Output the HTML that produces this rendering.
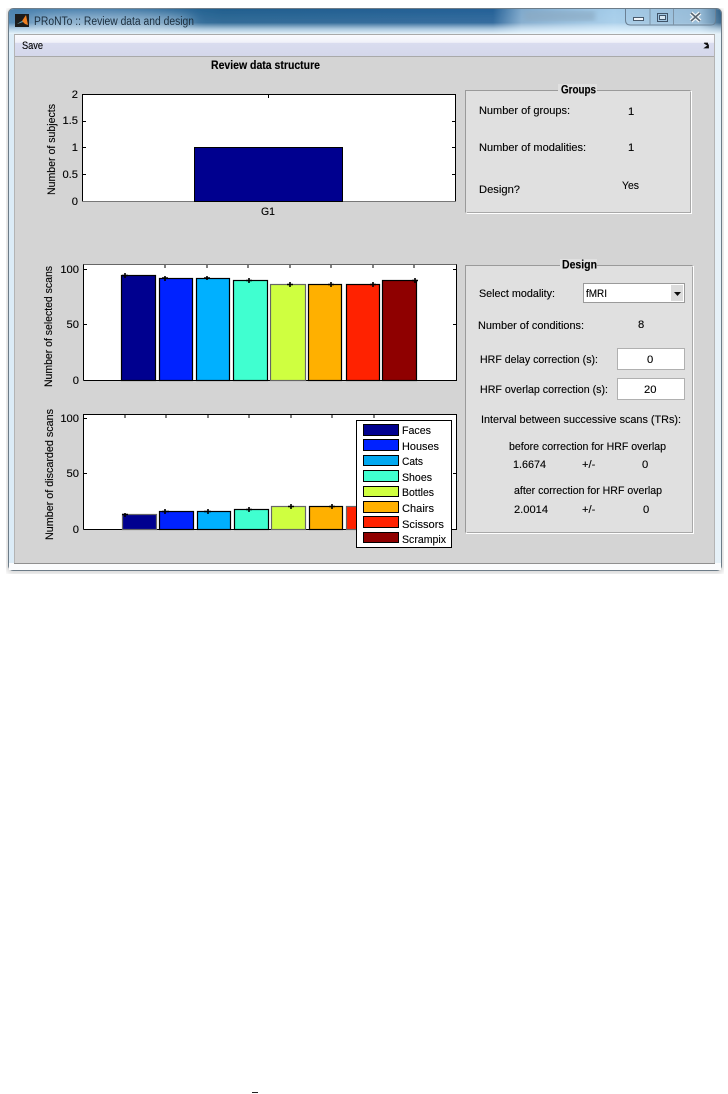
<!DOCTYPE html>
<html><head><meta charset="utf-8"><title>PRoNTo</title>
<style>
html,body{margin:0;padding:0;background:#fff;width:728px;height:1094px;overflow:hidden}
svg{display:block}
text{font-family:"Liberation Sans",sans-serif;font-size:11.2px;fill:#000;stroke:#000;stroke-width:.12px}
.b{font-weight:bold;font-size:11.5px;fill:#000}
</style></head><body>
<svg width="728" height="1094" viewBox="0 0 728 1094" xmlns="http://www.w3.org/2000/svg">
<defs>
<linearGradient id="tb" x1="0" x2="1" y1="0" y2="0">
<stop offset="0" stop-color="#4d84b0"/><stop offset=".12" stop-color="#3a74a5"/><stop offset=".3" stop-color="#22608f"/>
<stop offset=".68" stop-color="#256197"/><stop offset=".72" stop-color="#7fa9cc"/><stop offset=".85" stop-color="#a5cdea"/><stop offset=".97" stop-color="#8fb6d4"/><stop offset="1" stop-color="#2f5f86"/></linearGradient>
<linearGradient id="gl" x1="0" x2="0" y1="0" y2="1">
<stop offset="0" stop-color="#fff" stop-opacity="0"/><stop offset=".55" stop-color="#fff" stop-opacity=".08"/><stop offset=".8" stop-color="#e4f4ff" stop-opacity=".7"/><stop offset="1" stop-color="#f0faff" stop-opacity=".95"/></linearGradient>
<linearGradient id="mn" x1="0" x2="0" y1="0" y2="1">
<stop offset="0" stop-color="#fbfbfe"/><stop offset=".36" stop-color="#f0f1f9"/><stop offset=".4" stop-color="#d9dcef"/><stop offset="1" stop-color="#d4d7ea"/></linearGradient>
<linearGradient id="sd" x1="0" x2="0" y1="0" y2="1">
<stop offset="0" stop-color="#9cc4e2"/><stop offset=".25" stop-color="#c4dff2"/><stop offset="1" stop-color="#eef6fb"/></linearGradient>
<filter id="sh" x="-5%" y="-5%" width="110%" height="110%"><feGaussianBlur stdDeviation="2.5"/></filter>
<filter id="gw" x="-30%" y="-100%" width="160%" height="300%"><feGaussianBlur stdDeviation="6"/></filter>
<filter id="sf" x="0" y="0" width="100%" height="100%"><feGaussianBlur stdDeviation="0.32"/></filter>
</defs>

<g filter="url(#sf)">
<!-- window -->
<rect x="6" y="8" width="718" height="566" rx="6" fill="#000" opacity=".14" filter="url(#sh)"/>
<rect x="8.5" y="8.5" width="713" height="562" rx="5" fill="url(#sd)" stroke="#6d7c88"/>
<path d="M9 34V14q0-5 5-5H716q5 0 5 5V34Z" fill="url(#tb)"/>
<path d="M9 34V14q0-5 5-5H716q5 0 5 5V34Z" fill="url(#gl)"/>
<ellipse cx="110" cy="22" rx="85" ry="9" fill="#dcebf5" opacity=".55" filter="url(#gw)"/>
<rect x="9" y="34" width="5" height="530" fill="#dcecf7"/>
<rect x="715" y="34" width="6" height="530" fill="#e6f1f8"/>
<rect x="9" y="563" width="712" height="7" fill="#fbfcfd"/>

<!-- titlebar -->
<rect x="15" y="14" width="14" height="13" fill="#1b1b1b"/>
<path d="M17 24l5-3 4-6 2 10-3-1-2-2z" fill="#f08020"/>
<path d="M17 24l5-3 1 1z" fill="#3aa0c8"/>
<text x="34" y="25" style="font-size:11.5px;fill:#1c2e3e;stroke:none" textLength="160" lengthAdjust="spacingAndGlyphs">PRoNTo :: Review data and design</text>
<rect x="525" y="11" width="70" height="10" fill="#8aa8c0" opacity=".6" filter="url(#sh)"/>
<!-- caption buttons -->
<path d="M625.5 9V20q0 5 5 5H711q4 0 4.5-4V9" fill="#a9c8e0" fill-opacity=".25" stroke="#6a8094" stroke-width="1"/>
<path d="M650 9V25M673.5 9V25" stroke="#7d93a6" fill="none"/>
<rect x="633.5" y="17.5" width="10" height="3" fill="#f2f6fa" stroke="#4a5a6c"/>
<rect x="657.5" y="13.5" width="10" height="8" fill="none" stroke="#3f5268"/>
<rect x="659.5" y="15.5" width="6" height="4" fill="#d6e6f2" stroke="#3f5268"/>
<path d="M691 13l9 8M700 13l-9 8" stroke="#f4f6f8" stroke-width="4"/>
<path d="M691 13l9 8M700 13l-9 8" stroke="#5a6672" stroke-width="1.6"/>

<!-- client -->
<rect x="14" y="34" width="701" height="529" fill="#d4d4d4"/>
<rect x="14.5" y="34.5" width="700" height="22" fill="url(#mn)" stroke="#a9a9a9"/>
<path d="M14.5 34.5V563M714.5 34.5V563" stroke="#b4b4b4" fill="none"/>
<path d="M14 563.5H715" stroke="#8f8f8f"/>
<text x="22" y="49" textLength="21" lengthAdjust="spacingAndGlyphs">Save</text>
<path d="M704 43l3 2M704.5 43h3l0.5 3M708.5 48h-4l4-3z" stroke="#111" fill="#111" stroke-width=".8"/>

<text class="b" x="211" y="69" textLength="109" lengthAdjust="spacingAndGlyphs">Review data structure</text>

<!-- Axes 1 -->
<rect x="82.5" y="94.5" width="373" height="107" fill="#fff"/>
<path d="M82.5 201.5V94.5H455.5V201.5" fill="none" stroke="#000"/>
<path d="M82.5 201.5H455.5" stroke="#777"/>
<rect x="194.5" y="147.5" width="148" height="54" fill="#00008f" stroke="#000"/>
<path d="M268.5 95v3M83 94.5h3M83 121.5h3M83 147.5h3M83 174.5h3M452 121.5h3M452 147.5h3M452 174.5h3" stroke="#000"/>
<g text-anchor="end">
<text x="78" y="98">2</text><text x="78" y="124">1.5</text><text x="78" y="151">1</text><text x="78" y="178">0.5</text><text x="78" y="205">0</text>
</g>
<text x="261" y="215" textLength="14" lengthAdjust="spacingAndGlyphs">G1</text>
<text transform="translate(55,195) rotate(-90)" textLength="91" lengthAdjust="spacingAndGlyphs">Number of subjects</text>

<!-- Axes 2 -->
<rect x="83.5" y="264.5" width="373" height="116" fill="#fff"/>
<path d="M83.5 380.5V264.5H456.5V380.5H83.5" fill="none" stroke="#000"/>
<path d="M83.5 264.5H456.5" stroke="#666"/>
<g stroke="#000" stroke-width="1.2">
<rect x="121.5" y="275.5" width="34" height="105" fill="#00008f"/>
<rect x="159.5" y="278.5" width="33" height="102" fill="#0020ff"/>
<rect x="196.5" y="278.5" width="33" height="102" fill="#00b0ff"/>
<rect x="233.5" y="280.5" width="34" height="100" fill="#40ffd0"/>
<rect x="270.5" y="284.5" width="35" height="96" fill="#cfff40" stroke="#666"/>
<rect x="308.5" y="284.5" width="33" height="96" fill="#ffb000"/>
<rect x="346.5" y="284.5" width="33" height="96" fill="#ff2000"/>
<rect x="382.5" y="280.5" width="34" height="100" fill="#8f0000"/>
</g>
<g stroke="#000" fill="none">
<path stroke-width="1.6" d="M122 275.5h6M125 273v5M162 278h6M165 276v5M204 278h6M207 276v4M246 280.5h6M249 278v5M287 284.5h6M290 282v5M328 284.5h6M331 282v5M370 284.5h6M373 282v5M412 280.5h6M415 278v5"/>
<path d="M84 269.5h3M84 324.5h3M453 269.5h3M453 324.5h3M165 265v3M207 265v3M248 265v3M290 265v3M331 265v3M373 265v3M414 265v3"/>
</g>
<g text-anchor="end">
<text x="79" y="273">100</text><text x="79" y="328">50</text><text x="79" y="384">0</text>
</g>
<text transform="translate(52,387) rotate(-90)" textLength="121" lengthAdjust="spacingAndGlyphs">Number of selected scans</text>

<!-- Axes 3 -->
<rect x="83.5" y="414.5" width="373" height="115" fill="#fff"/>
<path d="M83.5 529.5V414.5H456.5V529.5H83.5" fill="none" stroke="#000"/>
<g stroke="#000" stroke-width="1.2">
<rect x="122.5" y="514.5" width="34" height="15" fill="#00008f" stroke="#666"/>
<rect x="159.5" y="511.5" width="34" height="18" fill="#0020ff"/>
<rect x="197.5" y="511.5" width="33" height="18" fill="#00b0ff"/>
<rect x="234.5" y="509.5" width="34" height="20" fill="#40ffd0"/>
<rect x="271.5" y="506.5" width="34" height="23" fill="#cfff40" stroke="#666"/>
<rect x="309.5" y="506.5" width="33" height="23" fill="#ffb000"/>
<rect x="346.5" y="506.5" width="34" height="23" fill="#ff2000" stroke="#666"/>
</g>
<g stroke="#000" fill="none">
<path stroke-width="1.6" d="M122 514.5h6M125 513v4M162 511.5h7M165 509v5M204 511.5h7M208 509v5M246 509.5h6M249 507v5M288 506.5h6M291 504v5M329 506.5h6M332 504v5"/>
<path d="M84 418.5h3M84 473.5h3M453 473.5h3M125 415v3M166 415v3M208 415v3M249 415v3M291 415v3M332 415v3M374 415v3"/>
</g>
<g text-anchor="end">
<text x="79" y="422">100</text><text x="79" y="477">50</text><text x="79" y="533">0</text>
</g>
<text transform="translate(53,540) rotate(-90)" textLength="131" lengthAdjust="spacingAndGlyphs">Number of discarded scans</text>

<!-- Legend -->
<rect x="356.5" y="420.5" width="95" height="127" fill="#fff" stroke="#000"/>
<g stroke="#000">
<rect x="363.5" y="424.5" width="35" height="11" fill="#00008f"/>
<rect x="363.5" y="439.5" width="35" height="11" fill="#0020ff"/>
<rect x="363.5" y="455.5" width="35" height="10" fill="#00a8f0"/>
<rect x="363.5" y="470.5" width="35" height="11" fill="#40ffd0"/>
<rect x="363.5" y="486.5" width="35" height="10" fill="#cfff40"/>
<rect x="363.5" y="501.5" width="35" height="11" fill="#ffb000"/>
<rect x="363.5" y="516.5" width="35" height="11" fill="#ff2000"/>
<rect x="363.5" y="532.5" width="35" height="10" fill="#8f0000"/>
</g>
<text x="402" y="434" textLength="29" lengthAdjust="spacingAndGlyphs">Faces</text>
<text x="402" y="450" textLength="37" lengthAdjust="spacingAndGlyphs">Houses</text>
<text x="402" y="465" textLength="21" lengthAdjust="spacingAndGlyphs">Cats</text>
<text x="402" y="481" textLength="30" lengthAdjust="spacingAndGlyphs">Shoes</text>
<text x="402" y="496" textLength="32" lengthAdjust="spacingAndGlyphs">Bottles</text>
<text x="402" y="512" textLength="32" lengthAdjust="spacingAndGlyphs">Chairs</text>
<text x="402" y="528" textLength="42" lengthAdjust="spacingAndGlyphs">Scissors</text>
<text x="402" y="543" textLength="44" lengthAdjust="spacingAndGlyphs">Scrampix</text>

<!-- Groups panel -->
<rect x="465.5" y="90.5" width="225" height="122" fill="#e0e0e0"/>
<path d="M465.5 212.5V90.5H690.5" fill="none" stroke="#9a9a9a"/>
<path d="M466.5 213.5H691.5V91" fill="none" stroke="#fff"/>
<path d="M467 212.5H690.5V92" fill="none" stroke="#a8a8a8"/>
<rect x="558" y="84" width="39" height="11" fill="#e0e0e0"/>
<text class="b" x="561" y="93.5" textLength="35" lengthAdjust="spacingAndGlyphs">Groups</text>
<text x="479" y="114" textLength="91" lengthAdjust="spacingAndGlyphs">Number of groups:</text>
<text x="628" y="115">1</text>
<text x="479" y="151" textLength="107" lengthAdjust="spacingAndGlyphs">Number of modalities:</text>
<text x="628" y="151">1</text>
<text x="479" y="193" textLength="41" lengthAdjust="spacingAndGlyphs">Design?</text>
<text x="622" y="189" textLength="17" lengthAdjust="spacingAndGlyphs">Yes</text>

<!-- Design panel -->
<rect x="465.5" y="265.5" width="227" height="267" fill="#e0e0e0"/>
<path d="M465.5 532.5V265.5H692.5" fill="none" stroke="#9a9a9a"/>
<path d="M466 533.5H693.5V266" fill="none" stroke="#fff"/>
<path d="M467 532.5H692.5V267" fill="none" stroke="#a8a8a8"/>
<rect x="560" y="259" width="37" height="11" fill="#e0e0e0"/>
<text class="b" x="562" y="268.5" textLength="35" lengthAdjust="spacingAndGlyphs">Design</text>
<text x="479" y="297" textLength="76" lengthAdjust="spacingAndGlyphs">Select modality:</text>
<rect x="583.5" y="283.5" width="101" height="19" fill="#fff" stroke="#9a9a9a"/>
<rect x="671" y="285" width="12" height="16" fill="#dcdcdc"/>
<path d="M674 292h7l-3.5 4z" fill="#111"/>
<text x="586" y="297" textLength="21" lengthAdjust="spacingAndGlyphs">fMRI</text>
<text x="478" y="329" textLength="106" lengthAdjust="spacingAndGlyphs">Number of conditions:</text>
<text x="638" y="328">8</text>
<text x="480" y="363" textLength="118" lengthAdjust="spacingAndGlyphs">HRF delay correction (s):</text>
<rect x="617.5" y="348.5" width="67" height="21" fill="#fff" stroke="#b0b0b0"/>
<text x="647" y="363">0</text>
<text x="480" y="393" textLength="128" lengthAdjust="spacingAndGlyphs">HRF overlap correction (s):</text>
<rect x="617.5" y="378.5" width="67" height="21" fill="#fff" stroke="#b0b0b0"/>
<text x="644" y="393">20</text>
<text x="481" y="423" textLength="200" lengthAdjust="spacingAndGlyphs">Interval between successive scans (TRs):</text>
<text x="509" y="450" textLength="157" lengthAdjust="spacingAndGlyphs">before correction for HRF overlap</text>
<text x="513" y="468" textLength="33" lengthAdjust="spacingAndGlyphs">1.6674</text>
<text x="582" y="468">+/-</text>
<text x="642" y="468">0</text>
<text x="514" y="494" textLength="148" lengthAdjust="spacingAndGlyphs">after correction for HRF overlap</text>
<text x="514" y="513" textLength="34" lengthAdjust="spacingAndGlyphs">2.0014</text>
<text x="582" y="513">+/-</text>
<text x="643" y="513">0</text>
</g>

<rect x="252" y="1092" width="6" height="1" fill="#222"/>
</svg>
</body></html>
